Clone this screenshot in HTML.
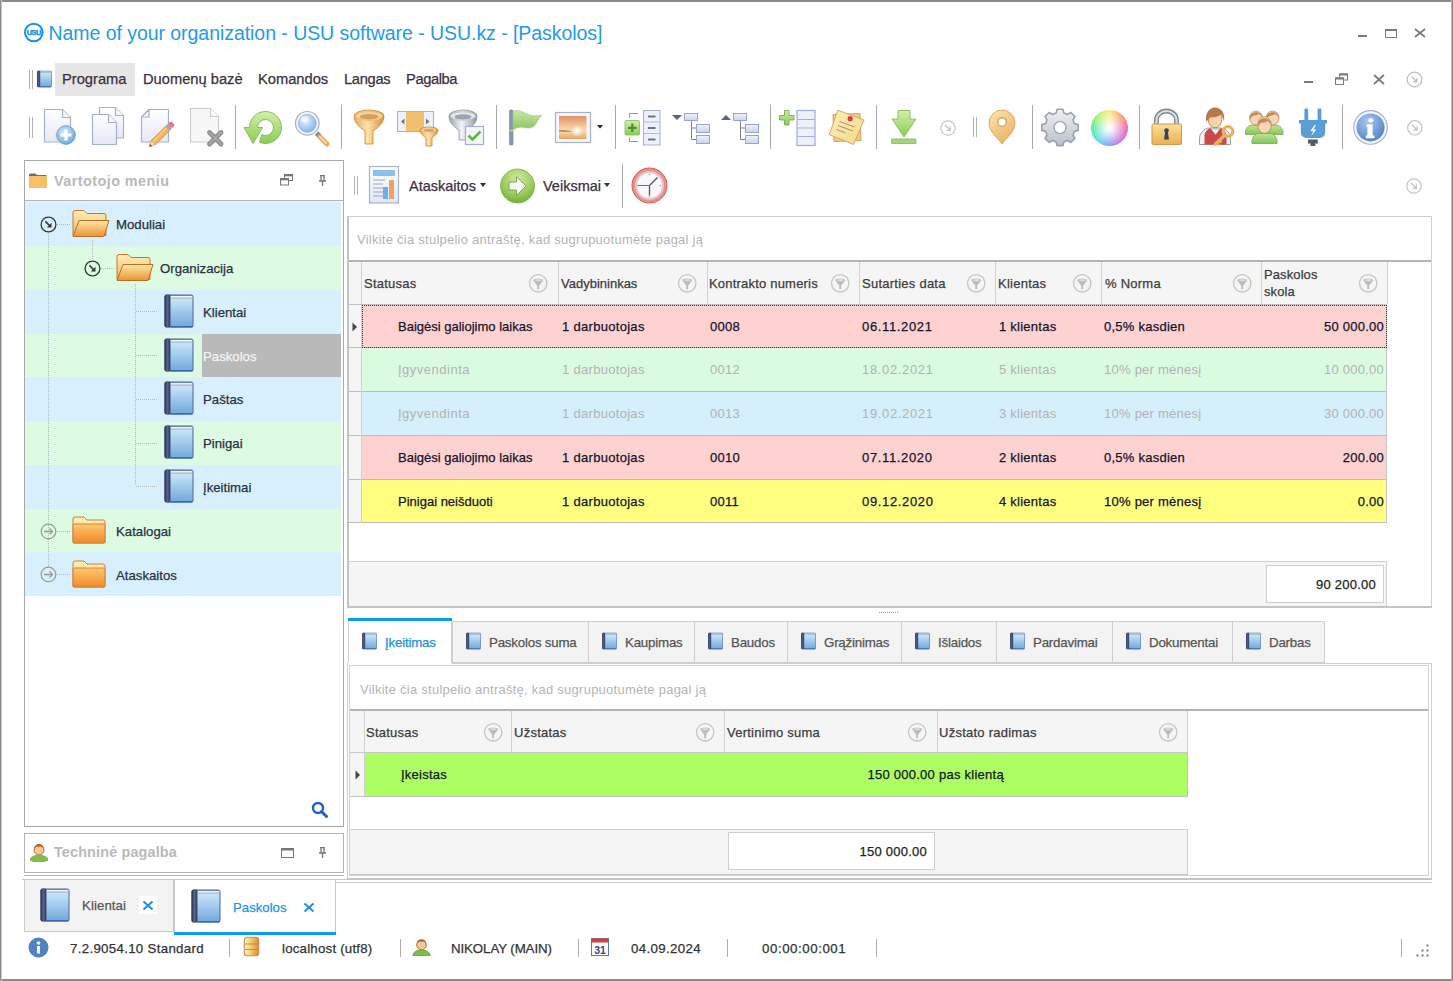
<!DOCTYPE html>
<html><head><meta charset="utf-8">
<style>
*{box-sizing:border-box;margin:0;padding:0}
html,body{width:1453px;height:981px;overflow:hidden;background:#fff;font-family:"Liberation Sans",sans-serif;color:#222}
.a{position:absolute}
.t{position:absolute;white-space:pre;line-height:1;-webkit-text-stroke:0.25px currentColor}
.g{font-size:13px;letter-spacing:0.25px;color:#1b1b2b}
.gl{color:#b4b4b4}
.h{font-size:13px;letter-spacing:0.25px;color:#3a3a3a}
.sep{position:absolute;width:1px;background:#a9a9a9}
.fil{position:absolute;width:19px;height:19px}
</style></head><body>
<svg width="0" height="0" style="position:absolute">
<defs>
<linearGradient id="bookg" x1="0" y1="0" x2="0" y2="1"><stop offset="0" stop-color="#c8e6f8"/><stop offset="1" stop-color="#74aade"/></linearGradient>
<linearGradient id="spineg" x1="0" y1="0" x2="1" y2="0"><stop offset="0" stop-color="#26304e"/><stop offset="0.5" stop-color="#56648a"/><stop offset="1" stop-color="#2a3456"/></linearGradient>
<symbol id="book" viewBox="0 0 30 34"><rect x="0.5" y="0.5" width="29" height="33" rx="2.5" fill="#4a6698"/><rect x="0.5" y="0.5" width="6" height="33" rx="2" fill="url(#spineg)"/><rect x="6.5" y="4.5" width="22" height="27.5" fill="url(#bookg)"/><rect x="6.5" y="1.8" width="22" height="2" fill="#f6f2f2"/><rect x="6.5" y="3.8" width="22" height="1.2" fill="#a8c8e0"/><rect x="6.5" y="32" width="22" height="1.5" fill="#3a68b4"/></symbol>
<symbol id="filt" viewBox="0 0 20 20"><circle cx="10.2" cy="10.3" r="8.7" fill="none" stroke="#c6c6c6" stroke-width="1.3"/><path d="M5.2 7.2h10l-4.1 5.6v3.4h-1.8v-3.4z" fill="#bcbcbc"/><ellipse cx="10.2" cy="7.1" rx="5" ry="1.6" fill="#c4c4c4"/><ellipse cx="10.2" cy="7.1" rx="3" ry="0.7" fill="#eeeeee"/></symbol>
<linearGradient id="fold1" x1="0" y1="0" x2="0" y2="1"><stop offset="0" stop-color="#ffe7a4"/><stop offset="1" stop-color="#eb9436"/></linearGradient>
<linearGradient id="fold0" x1="0" y1="0" x2="0" y2="1"><stop offset="0" stop-color="#ffeeb8"/><stop offset="1" stop-color="#f0b660"/></linearGradient>
<linearGradient id="fold2" x1="0" y1="0" x2="0" y2="1"><stop offset="0" stop-color="#ffc870"/><stop offset="1" stop-color="#f08a28"/></linearGradient>
<symbol id="fopen" viewBox="0 0 38 28"><path d="M1 3a2 2 0 0 1 2-2h9l3 3h17a2 2 0 0 1 2 2v20H1z" fill="url(#fold0)" stroke="#c0782e" stroke-width="1"/><path d="M7 11h30l-5 16H1z" fill="url(#fold1)" stroke="#b8702a" stroke-width="1" stroke-linejoin="round"/></symbol>
<symbol id="fclosed" viewBox="0 0 34 28"><path d="M1 3a2 2 0 0 1 2-2h9l3 3h16a2 2 0 0 1 2 2v20a1 1 0 0 1-1 1H2a1 1 0 0 1-1-1z" fill="#ffeab0" stroke="#c8843a" stroke-width="1"/><rect x="1" y="8" width="32" height="19" rx="1" fill="url(#fold2)" stroke="#c8843a" stroke-width="1"/></symbol>
<symbol id="expd" viewBox="0 0 17 17"><circle cx="8.5" cy="8.5" r="7.4" fill="none" stroke="#383838" stroke-width="1.3"/><path d="M5.4 5.4l5.2 5.2" stroke="#383838" stroke-width="1.5"/><path d="M11.5 6.8v4.7H6.8z" fill="#383838"/></symbol>
<symbol id="expr" viewBox="0 0 17 17"><circle cx="8.5" cy="8.5" r="7.3" fill="none" stroke="#9a9a9a" stroke-width="1.2"/><path d="M4 8.5h8.5M9.5 5.5l3 3-3 3" fill="none" stroke="#9a9a9a" stroke-width="1.3"/></symbol>
<symbol id="circ" viewBox="0 0 17 17"><circle cx="8.5" cy="8.5" r="7.3" fill="none" stroke="#bdbdbd" stroke-width="1.2"/><path d="M5.5 5.5l5 5M10.8 7v3.8H7" fill="none" stroke="#bdbdbd" stroke-width="1.3"/></symbol>
</defs>
</svg>

<!-- window border -->
<div class="a" style="left:0;top:0;width:1453px;height:981px;border:1px solid #8a8a8a;border-top:2px solid #8a8a8a;border-bottom:2px solid #8a8a8a"></div>
<div class="a" style="left:1451px;top:0;width:1px;height:981px;background:#b4b4b4"></div><div class="a" style="left:1px;top:0;width:1px;height:981px;background:#c8c8c8"></div>

<!-- TITLE -->
<svg class="a" style="left:22px;top:21px" width="24" height="24" viewBox="0 0 24 24"><circle cx="11.8" cy="11.5" r="8.8" fill="none" stroke="#1a90ec" stroke-width="2"/><text x="11.8" y="14" font-family="Liberation Sans" font-size="7.6" font-weight="bold" fill="#1a90ec" stroke="#1a90ec" stroke-width="0.4" text-anchor="middle" letter-spacing="-0.6">USU</text></svg>
<div class="t" style="left:48.5px;top:24.2px;font-size:19.5px;letter-spacing:-0.05px;color:#259ae8;-webkit-text-stroke:0">Name of your organization - USU software - USU.kz - [Paskolos]</div>
<div class="a" style="left:1358px;top:35px;width:9px;height:2px;background:#7a7a7a"></div>
<div class="a" style="left:1385px;top:29px;width:12px;height:9px;border:1px solid #7a7a7a;border-top:2px solid #7a7a7a"></div>
<svg class="a" style="left:1414px;top:28px" width="12" height="10"><path d="M1 1L11 9M11 1L1 9" stroke="#7a7a7a" stroke-width="1.7"/></svg>

<!-- MENU -->
<div class="a" style="left:29px;top:70px;width:1px;height:19px;background:#b0b0b0"></div>
<div class="a" style="left:32px;top:70px;width:1px;height:19px;background:#b0b0b0"></div>
<svg class="a" style="left:37px;top:70px" width="15" height="18"><use href="#book" width="15" height="18"/></svg>
<div class="a" style="left:55px;top:63px;width:80px;height:33px;background:#e6e6e6"></div>
<div class="t" style="left:62px;top:71.5px;font-size:14.7px;color:#3c3040">Programa</div>
<div class="t" style="left:143px;top:71.5px;font-size:14.7px;color:#3c3040">Duomenų bazė</div>
<div class="t" style="left:258px;top:71.5px;font-size:14.7px;color:#3c3040">Komandos</div>
<div class="t" style="left:344px;top:71.5px;font-size:14.7px;letter-spacing:-0.3px;color:#3c3040">Langas</div>
<div class="t" style="left:406px;top:71.5px;font-size:14.7px;letter-spacing:-0.4px;color:#3c3040">Pagalba</div>
<div class="a" style="left:1304px;top:81px;width:9px;height:2px;background:#7a7a7a"></div>
<svg class="a" style="left:1335px;top:73px" width="14" height="13"><rect x="4.5" y="1" width="8" height="6" fill="#fff" stroke="#7a7a7a" stroke-width="1"/><rect x="4.5" y="0.5" width="8" height="2" fill="#7a7a7a"/><rect x="0.5" y="5" width="8" height="6.5" fill="#fff" stroke="#7a7a7a" stroke-width="1"/><rect x="0.5" y="4.5" width="8" height="2" fill="#7a7a7a"/></svg>
<svg class="a" style="left:1373px;top:74px" width="12" height="11"><path d="M1 1L11 10M11 1L1 10" stroke="#7a7a7a" stroke-width="1.7"/></svg>
<svg class="a" style="left:1406px;top:71px" width="17" height="17"><use href="#circ"/></svg>


<!-- TOOLBAR -->
<svg class="a" style="left:0;top:0" width="1453" height="160" viewBox="0 0 1453 160">
<defs>
<linearGradient id="pg" x1="0" y1="0" x2="0" y2="1"><stop offset="0" stop-color="#ffffff"/><stop offset="1" stop-color="#e4e9f4"/></linearGradient>
<radialGradient id="plusg" cx="0.4" cy="0.35" r="0.7"><stop offset="0" stop-color="#d6ecfb"/><stop offset="1" stop-color="#6aa6da"/></radialGradient>
<linearGradient id="greeng2" x1="0" y1="0" x2="0" y2="1"><stop offset="0" stop-color="#d2eeaa"/><stop offset="1" stop-color="#8ccc52"/></linearGradient>
<linearGradient id="greeng" x1="0" y1="0" x2="0" y2="1"><stop offset="0" stop-color="#c6eaa0"/><stop offset="1" stop-color="#6fbf3a"/></linearGradient>
<radialGradient id="lensg" cx="0.4" cy="0.35" r="0.7"><stop offset="0" stop-color="#e8f2ff"/><stop offset="1" stop-color="#7eb2ea"/></radialGradient>
<linearGradient id="goldg" x1="0" y1="0" x2="1" y2="0"><stop offset="0" stop-color="#e9a95a"/><stop offset="0.45" stop-color="#ffe3a8"/><stop offset="1" stop-color="#d8913e"/></linearGradient>
<linearGradient id="silvg" x1="0" y1="0" x2="1" y2="0"><stop offset="0" stop-color="#9aa3ad"/><stop offset="0.45" stop-color="#f1f4f7"/><stop offset="1" stop-color="#8f99a4"/></linearGradient>
<linearGradient id="sunsetg" x1="0" y1="0" x2="0" y2="1"><stop offset="0" stop-color="#de9266"/><stop offset="0.45" stop-color="#f4c89a"/><stop offset="0.65" stop-color="#f8dcae"/><stop offset="1" stop-color="#e8a462"/></linearGradient>
<linearGradient id="flagg" x1="0" y1="0" x2="0" y2="1"><stop offset="0" stop-color="#c8e8a4"/><stop offset="1" stop-color="#8cc460"/></linearGradient>
<radialGradient id="sung" cx="0.5" cy="0.5" r="0.5"><stop offset="0" stop-color="#ffffff"/><stop offset="1" stop-color="#ffffff" stop-opacity="0"/></radialGradient>
<linearGradient id="boxg" x1="0" y1="0" x2="0" y2="1"><stop offset="0" stop-color="#eef2fa"/><stop offset="1" stop-color="#c9d3ea"/></linearGradient>
<linearGradient id="noteg" x1="0" y1="0" x2="1" y2="1"><stop offset="0" stop-color="#fdf0b8"/><stop offset="1" stop-color="#f4d888"/></linearGradient>
<linearGradient id="pinng" x1="0" y1="0" x2="0.6" y2="1"><stop offset="0" stop-color="#fde6b0"/><stop offset="1" stop-color="#eab46a"/></linearGradient>
<linearGradient id="gearg" x1="0" y1="0" x2="0" y2="1"><stop offset="0" stop-color="#eef0f4"/><stop offset="1" stop-color="#b9bfca"/></linearGradient>
<linearGradient id="lockg" x1="0" y1="0" x2="0" y2="1"><stop offset="0" stop-color="#fbe09a"/><stop offset="1" stop-color="#e8b050"/></linearGradient>
<linearGradient id="shackg" x1="0" y1="0" x2="1" y2="0"><stop offset="0" stop-color="#8c96a0"/><stop offset="0.5" stop-color="#e6eaee"/><stop offset="1" stop-color="#7c8690"/></linearGradient>
<linearGradient id="grpg" x1="0" y1="0" x2="0" y2="1"><stop offset="0" stop-color="#c0e494"/><stop offset="1" stop-color="#86c456"/></linearGradient>
<radialGradient id="infog" cx="0.4" cy="0.3" r="0.75"><stop offset="0" stop-color="#a8c8f0"/><stop offset="1" stop-color="#5080c8"/></radialGradient>
<linearGradient id="plugg" x1="0" y1="0" x2="0" y2="1"><stop offset="0" stop-color="#6cb2e8"/><stop offset="1" stop-color="#3a86c8"/></linearGradient>
<radialGradient id="clockg" cx="0.5" cy="0.5" r="0.5"><stop offset="0.75" stop-color="#f6f8fa"/><stop offset="1" stop-color="#d8dde2"/></radialGradient>
</defs>
<!-- grip -->
<path d="M29.5 117v21M32.5 117v21" stroke="#b3b3b3" stroke-width="1"/>
<!-- separators -->
<g stroke="#a8a8a8" stroke-width="1">
<path d="M235.5 105v44M341.5 105v44M496.5 105v44M615.5 105v44M770.5 105v44M876.5 105v44M1032.5 105v44M1139.5 105v44M1342.5 105v44"/>
</g>
<!-- new doc -->
<path d="M44.5 109.5h18l8 8v24.5h-26z" fill="url(#pg)" stroke="#a7b0d2" stroke-width="1.2"/>
<path d="M62.5 109.5v8h8" fill="#f4f6fb" stroke="#a7b0d2" stroke-width="1.2"/>
<circle cx="66" cy="135" r="9.3" fill="url(#plusg)" stroke="#6f9fd0" stroke-width="1"/>
<path d="M66 129.5v11M60.5 135h11" stroke="#fff" stroke-width="3.2"/>
<!-- copy -->
<path d="M99.5 107.5h16l8 8v22.5h-24z" fill="url(#pg)" stroke="#a7b0d2" stroke-width="1.2"/>
<path d="M115.5 107.5v8h8" fill="#f4f6fb" stroke="#a7b0d2" stroke-width="1.2"/>
<path d="M92.5 114.5h16l8 8v22h-24z" fill="url(#pg)" stroke="#a7b0d2" stroke-width="1.2"/>
<path d="M108.5 114.5v8h8" fill="#f4f6fb" stroke="#a7b0d2" stroke-width="1.2"/>
<!-- edit -->
<path d="M149 109.5h19.5v32.5h-27v-25z" fill="url(#pg)" stroke="#a7b0d2" stroke-width="1.2"/>
<path d="M149 109.5v7.5h-7.5z" fill="#f8f9fc" stroke="#a7b0d2" stroke-width="1.2" stroke-linejoin="round"/>
<g transform="translate(162 134) rotate(-45)">
<rect x="-12" y="-3" width="20" height="6" fill="#f2b850" stroke="#c88a3a" stroke-width="0.7"/>
<path d="M-12 -1h20" stroke="#fcd890" stroke-width="1"/>
<rect x="8" y="-3" width="3" height="6" fill="#98a8c8"/>
<rect x="11" y="-3" width="4.5" height="6" rx="1.5" fill="#e87878"/>
<path d="M-12 -3l-6 3 6 3z" fill="#f8e0b0" stroke="#c88a3a" stroke-width="0.6"/>
<path d="M-15.5 -1.2l-2.5 1.2 2.5 1.2z" fill="#444"/>
</g>
<!-- delete -->
<path d="M190.5 108.5h20l8 8v25.5h-28z" fill="#f7f7f7" stroke="#cccccc" stroke-width="1.2"/>
<path d="M210.5 108.5v8h8" fill="#fbfbfb" stroke="#cccccc" stroke-width="1.2"/>
<path d="M209.5 132.5l11.5 11.5M221 132.5l-11.5 11.5" stroke="#8c8c8c" stroke-width="4.8" stroke-linecap="round"/>
<path d="M209.5 132.5l11.5 11.5M221 132.5l-11.5 11.5" stroke="#a8a8a8" stroke-width="2" stroke-linecap="round"/>
<!-- refresh -->
<path d="M259.51 142.33A16 16 0 1 0 249.50 127.50L244 127.5L253 143.5L262.5 127.5L257.50 127.50A8 8 0 1 1 261.74 134.56z" fill="url(#greeng2)" stroke="#8cbc5c" stroke-width="1"/>
<!-- magnifier -->
<path d="M316.5 133l3 3" stroke="#8090b0" stroke-width="5"/>
<path d="M320 137l7 7" stroke="#e8a860" stroke-width="5" stroke-linecap="round"/>
<path d="M320 137l6 6" stroke="#f8d8a0" stroke-width="2" stroke-linecap="round"/>
<circle cx="307.3" cy="123.3" r="11.8" fill="#f4f6fb" stroke="#a8b0d0" stroke-width="1.2"/>
<circle cx="307.3" cy="123.3" r="9" fill="url(#lensg)" stroke="#8ca4d4" stroke-width="0.6"/>
<ellipse cx="304.5" cy="119.5" rx="4" ry="3" fill="#fff" opacity="0.7"/>
<!-- gold funnel -->
<path d="M354 116a15 6 0 0 1 30 0c0 8-8 13-11 15v13h-8v-13c-3-2-11-7-11-15z" fill="url(#goldg)" stroke="#c8862e" stroke-width="0.8"/>
<ellipse cx="369" cy="116" rx="13.5" ry="4.5" fill="#f6d49a" stroke="#e8b870" stroke-width="0.8"/><ellipse cx="369" cy="116.8" rx="9.5" ry="2.8" fill="#d8a060"/>
<!-- column filter -->
<rect x="397.5" y="111.5" width="36" height="20" fill="#eef1fa" stroke="#a7b0d2" stroke-width="1"/>
<rect x="406" y="112" width="18" height="19" fill="#f0c070"/>
<path d="M401 121.5l3.5-3v6zM429.5 121.5l-3.5-3v6z" fill="#6c7890"/>
<path d="M420 130a9 3 0 0 1 18 0c0 4-4 6-6 8v8h-6v-8c-2-2-6-4-6-8z" fill="url(#goldg)" stroke="#c8862e" stroke-width="0.8"/>
<ellipse cx="429" cy="130" rx="7.5" ry="2.2" fill="#f2cc90"/><ellipse cx="429" cy="130.4" rx="5" ry="1.3" fill="#d8a060"/>
<!-- gray funnel check -->
<path d="M449 116a14 6 0 0 1 28 0c0 8-7 12-10 14v10h-8v-10c-3-2-10-6-10-14z" fill="url(#silvg)" stroke="#8a949e" stroke-width="0.8"/>
<ellipse cx="463" cy="116" rx="12.5" ry="4.2" fill="#e4e8ec" stroke="#b8c0c8" stroke-width="0.8"/><ellipse cx="463" cy="116.8" rx="8.5" ry="2.6" fill="#9aa4ae"/>
<rect x="465.5" y="126.5" width="18" height="18" fill="#f4f6fb" stroke="#a7b0d2" stroke-width="1.2"/>
<path d="M468.5 135.5l4 4 8-8" fill="none" stroke="#5cb83a" stroke-width="2.6"/>
<!-- flag -->
<rect x="509.5" y="110" width="3.5" height="35" rx="1" fill="#8894b4" stroke="#7080a0" stroke-width="0.6"/>
<rect x="509.5" y="129.5" width="3.5" height="2" fill="#b0d890"/>
<path d="M513 111c5-1.5 9 0.5 13 2.5 5 2.5 10 3 16 1.5-2 3-4.5 5-5.5 8-1.5 3.5-5 5.5-9.5 5-4-.5-8-2.5-14 2z" fill="url(#flagg)" stroke="#a8cc88" stroke-width="0.7"/>
<!-- image -->
<rect x="555.5" y="112.5" width="35" height="30" fill="#f6f8fc" stroke="#a7b0d2" stroke-width="1.2"/>
<rect x="559" y="116" width="27.5" height="23" fill="url(#sunsetg)"/>
<path d="M559 130c6 0 10 0.5 14 1.5-5 .5-9 .5-14 0z" fill="#8a6a50" opacity="0.7"/>
<circle cx="577" cy="131" r="6" fill="url(#sung)"/>
<path d="M597 125h6l-3 3.5z" fill="#222"/>
<!-- add group -->
<path d="M638 113.5h-8.5v4M638 141.5h-8.5v-4" fill="none" stroke="#8a94aa" stroke-width="1"/>
<rect x="625" y="120.5" width="14.5" height="14.5" rx="1" fill="url(#greeng2)" stroke="#88b860" stroke-width="0.8"/>
<path d="M632.3 123.5v8.5M628 127.8h8.5" stroke="#4e8a36" stroke-width="2.2"/>
<rect x="643.5" y="110.5" width="16.5" height="34.5" fill="#eef1fa" stroke="#a7b0d2" stroke-width="1"/>
<path d="M643.5 122h16.5M643.5 133.5h16.5" stroke="#b4bcd8" stroke-width="1"/>
<path d="M648 116.5h7.5M648 128h7.5M648 139.5h7.5" stroke="#6c7488" stroke-width="1.8"/>
<!-- tree expand -->
<path d="M672 115h10l-5 5z" fill="#5a6478"/>
<path d="M691.5 120v19.5h5M691.5 128h5" fill="none" stroke="#7a8296" stroke-width="1"/>
<rect x="684.5" y="113.5" width="13" height="7" fill="url(#boxg)" stroke="#99a4c8" stroke-width="1"/>
<rect x="696.5" y="124.5" width="13" height="8" fill="url(#boxg)" stroke="#99a4c8" stroke-width="1"/>
<rect x="696.5" y="135.5" width="13" height="8" fill="url(#boxg)" stroke="#99a4c8" stroke-width="1"/>
<!-- tree collapse -->
<path d="M721 120h10l-5-5z" fill="#5a6478"/>
<path d="M740.5 120v19.5h5M740.5 128h5" fill="none" stroke="#7a8296" stroke-width="1"/>
<rect x="733.5" y="113.5" width="13" height="7" fill="url(#boxg)" stroke="#99a4c8" stroke-width="1"/>
<rect x="745.5" y="124.5" width="13" height="8" fill="url(#boxg)" stroke="#99a4c8" stroke-width="1"/>
<rect x="745.5" y="135.5" width="13" height="8" fill="url(#boxg)" stroke="#99a4c8" stroke-width="1"/>
<!-- plus list -->
<path d="M784.5 110.5h4.5v5h5v4.5h-5v5h-4.5v-5h-5v-4.5h5z" fill="url(#greeng2)" stroke="#78a850" stroke-width="0.9"/>
<rect x="797" y="110.5" width="18" height="35" fill="#eef1fa" stroke="#a2aad8" stroke-width="1.2"/>
<path d="M797 119.5h18M797 128h18M797 136.5h18" stroke="#a8b0d8" stroke-width="1"/>
<!-- notes -->
<path d="M833 114.5l27-1 1 27-27 1z" fill="#f0cc84" stroke="#d49a50" stroke-width="0.9"/>
<path d="M837.8 110.2L864 120 853.5 144.5 829.3 134.7z" fill="url(#noteg)" stroke="#d4a058" stroke-width="0.9"/>
<path d="M839.5 121.5l15 5.5M838 125.5l15 5.5M836.5 129.5l9 3.3" stroke="#9a8a6a" stroke-width="0.9"/>
<circle cx="850.2" cy="118.7" r="2.6" fill="#d83c40"/>
<!-- download -->
<path d="M898 110.5h12v8.5h6l-12 18-12-18h6z" fill="url(#greeng2)" stroke="#88b860" stroke-width="0.9"/>
<rect x="891.5" y="139" width="24.5" height="4.5" rx="0.5" fill="#a8d478" stroke="#88b860" stroke-width="0.8"/>
<!-- small circle -->
<g transform="translate(940,120)"><circle cx="8" cy="8" r="7.2" fill="none" stroke="#c4c4c4" stroke-width="1.2"/><path d="M5 5l5 5M10.3 6.5v3.8H6.5" fill="none" stroke="#c4c4c4" stroke-width="1.3"/></g>
<path d="M973.5 117v20M976.5 117v20" stroke="#b3b3b3" stroke-width="1"/>
<!-- map pin -->
<path d="M1002 110a13 13 0 0 1 13 13c0 9-9 15-13 21-4-6-13-12-13-21a13 13 0 0 1 13-13z" fill="url(#pinng)" stroke="#d49a48" stroke-width="0.8"/>
<circle cx="1002" cy="122" r="4.2" fill="#fff" stroke="#d8a868" stroke-width="1.4"/>
<!-- gear -->
<path d="M1057.11 109.23L1062.89 109.23L1063.88 113.01L1067.50 114.51L1070.87 112.53L1074.97 116.63L1072.99 120.00L1074.49 123.62L1078.27 124.61L1078.27 130.39L1074.49 131.38L1072.99 135.00L1074.97 138.37L1070.87 142.47L1067.50 140.49L1063.88 141.99L1062.89 145.77L1057.11 145.77L1056.12 141.99L1052.50 140.49L1049.13 142.47L1045.03 138.37L1047.01 135.00L1045.51 131.38L1041.73 130.39L1041.73 124.61L1045.51 123.62L1047.01 120.00L1045.03 116.63L1049.13 112.53L1052.50 114.51L1056.12 113.01z" fill="url(#gearg)" stroke="#9aa2b0" stroke-width="1.6" stroke-linejoin="round"/>
<circle cx="1060" cy="127.5" r="6" fill="#fff" stroke="#9aa2b0" stroke-width="1.2"/>
<!-- lock -->
<path d="M1156.5 124v-4a10 9 0 0 1 20 0v4" fill="none" stroke="#7c8894" stroke-width="4.8"/>
<path d="M1156.5 124v-4a10 9 0 0 1 20 0v4" fill="none" stroke="#d8dde2" stroke-width="2"/>
<rect x="1152" y="124" width="29.5" height="20.5" rx="1.5" fill="url(#lockg)" stroke="#d0964a" stroke-width="1"/>
<circle cx="1166.5" cy="130.5" r="2.3" fill="#3a4656"/>
<path d="M1165.3 131h2.4l1.3 8.5h-5z" fill="#3a4656"/>
<!-- user key -->
<path d="M1199.5 144.5v-6c0-5.5 4.5-10 10-10.5h11c5.5.5 10 5 10 10.5v6z" fill="#f2f2f2" stroke="#909090" stroke-width="0.9"/>
<path d="M1204.5 144.5v-10c1-3.5 3.5-5.5 6-6.5l5 6.5 5-6.5c2.5 1 5 3 6 6.5v10z" fill="#c84a4a"/>
<path d="M1210.5 128l5 6.5 5-6.5-5 2z" fill="#fff" stroke="#a0a0a0" stroke-width="0.6"/>
<ellipse cx="1215" cy="119.5" rx="6.8" ry="8.3" fill="#f5d2a8" stroke="#b07a50" stroke-width="0.8"/>
<path d="M1206.5 122c-2-8 2.5-14.5 8.5-14.5s10.5 5.5 9 14c-.8-3.5-1.8-5.5-3.3-7-2 2-5.5 3-10 2.8-1.5 1-2.8 2.5-4.2 4.7z" fill="#b8764a"/>
<circle cx="1228" cy="131.5" r="4.8" fill="none" stroke="#e8b060" stroke-width="3.2"/>
<path d="M1225 135l-9.5 9" stroke="#e8b060" stroke-width="3.6" stroke-linecap="round"/>
<path d="M1219.5 140.5l2.2 2.2M1217 143l2 2" stroke="#e8b060" stroke-width="2"/>
<!-- group -->
<path d="M1245.5 134.5v-2.5c0-4 3-7.0 7-7.0h6.0c4 0 7 4.5 7 7.0v2.5z" fill="url(#grpg)" stroke="#78a850" stroke-width="0.8"/>
<ellipse cx="1256" cy="118" rx="6.5" ry="7" fill="#f8d6b4" stroke="#b8845a" stroke-width="0.7"/>
<path d="M1249.5 119c-0.5-9 14.0 -9 13.0 0c-1-3-2.5-4.5-4-5-1.5 1.5-4.5 2-5.0 1.5-1.5 1-2.5 2-3 3.5z" fill="#c48a5c"/>
<path d="M1263 134.5v-2.5c0-4 3-7.0 7-7.0h6c4 0 7 4.5 7 7.0v2.5z" fill="url(#grpg)" stroke="#78a850" stroke-width="0.8"/>
<ellipse cx="1272.5" cy="118" rx="6.5" ry="7" fill="#f8d6b4" stroke="#b8845a" stroke-width="0.7"/>
<path d="M1266.0 119c-0.5-9 14.0 -9 13.0 0c-1-3-2.5-4.5-4-5-1.5 1.5-4.5 2-5.0 1.5-1.5 1-2.5 2-3 3.5z" fill="#c48a5c"/>
<path d="M1252 143.5v-2.5c0-4 3-7.5 7-7.5h11c4 0 7 5.0 7 7.5v2.5z" fill="url(#grpg)" stroke="#78a850" stroke-width="0.8"/>
<ellipse cx="1264.5" cy="125" rx="6.8" ry="8.4" fill="#f8d6b4" stroke="#b8845a" stroke-width="0.7"/>
<path d="M1257.7 126c-0.5-10.4 14.6 -10.4 13.6 0c-1-3-2.5-4.5-4-5-1.5 1.5-4.5 2-5.6 1.5-1.5 1-2.5 2-3 3.5z" fill="#c48a5c"/>
<!-- plug -->
<rect x="1304.4" y="108.5" width="3.8" height="13" rx="1.2" fill="#5a9fd4"/>
<rect x="1317.6" y="108.5" width="3.8" height="13" rx="1.2" fill="#5a9fd4"/>
<path d="M1299 120h28v3.6h-1.8v8.4c0 3.5-2.5 6-6 6h-12.4c-3.5 0-6-2.5-6-6v-8.4h-1.8z" fill="#5a9fd4"/>
<path d="M1314.5 125l-4 6h2.8l-2.2 5 5.2-6.5h-2.8l2.4-4.5z" fill="#fff"/>
<path d="M1308 139.5h9.8v4h-2.5v2.5h-4.8v-2.5h-2.5z" fill="#505a68"/>
<!-- info -->
<circle cx="1370.5" cy="127.4" r="16.8" fill="#f4f6fc" stroke="#a4aed0" stroke-width="1.1"/>
<circle cx="1370.5" cy="127.4" r="14" fill="url(#infog)"/>
<ellipse cx="1370.8" cy="120.3" rx="2.6" ry="2.2" fill="#fff"/>
<path d="M1367.2 124.2h5.4v11.2h1.8v2.8h-8.6v-2.8h1.6v-8.4h-1.2z" fill="#fff"/>
<!-- small circle right -->
<g transform="translate(1406.8,119.8)"><circle cx="8" cy="8" r="7.2" fill="none" stroke="#c4c4c4" stroke-width="1.2"/><path d="M5 5l5 5M10.3 6.5v3.8H6.5" fill="none" stroke="#c4c4c4" stroke-width="1.3"/></g>
</svg>
<div class="a" style="left:1091px;top:110px;width:37px;height:36px;border-radius:50%;background:conic-gradient(from 0deg,#f8ec80 0deg,#f8a070 45deg,#f06aa8 85deg,#d070e0 130deg,#8aa0f0 185deg,#58dcf0 225deg,#60e890 275deg,#b8f070 320deg,#f8ec80 360deg)"></div>
<div class="a" style="left:1091px;top:110px;width:37px;height:36px;border-radius:50%;background:radial-gradient(circle at 50% 50%,#fff 0,rgba(255,255,255,0.9) 12%,rgba(255,255,255,0) 70%)"></div>



<!-- LEFT PANEL -->
<div class="a" style="left:24px;top:160px;width:320px;height:667px;border:1px solid #a9a9a9;background:#fff"></div>
<div class="a" style="left:25px;top:200px;width:318px;height:1px;background:#b4b4b4"></div>
<svg class="a" style="left:29px;top:173px" width="18" height="15"><path d="M0 2a1.5 1.5 0 0 1 1.5-1.5h5l1.5 1.5h9.5v3H0z" fill="#6d6d6d"/><rect x="0" y="3" width="18" height="12" fill="#f8c066"/></svg>
<div class="t" style="left:54px;top:174.2px;font-size:14.4px;font-weight:bold;color:#b9b9b9;letter-spacing:0.45px;-webkit-text-stroke:0">Vartotojo meniu</div>
<svg class="a" style="left:280px;top:174px" width="13" height="12"><rect x="4.5" y="0.5" width="8" height="6" fill="#fff" stroke="#777" stroke-width="1"/><rect x="4.5" y="0.5" width="8" height="1.8" fill="#777"/><rect x="0.5" y="4.5" width="8" height="6.5" fill="#fff" stroke="#777" stroke-width="1"/><rect x="0.5" y="4.5" width="8" height="1.8" fill="#777"/></svg>
<svg class="a" style="left:318px;top:175px" width="9" height="11"><path d="M2 0.5h5M3 0.5v5.5M6 0.5v5.5M1 6h7M4.5 6v5" stroke="#777" stroke-width="1.3" fill="none"/></svg>


<div class="a" style="left:25px;top:202px;width:316px;height:44px;background:#d8f0fd;"></div>
<div class="a" style="left:25px;top:246px;width:316px;height:44px;background:#ddfae2;"></div>
<div class="a" style="left:25px;top:290px;width:316px;height:44px;background:#d8f0fd;"></div>
<div class="a" style="left:25px;top:334px;width:316px;height:43px;background:#ddfae2;"></div>
<div class="a" style="left:25px;top:377px;width:316px;height:44px;background:#d8f0fd;"></div>
<div class="a" style="left:25px;top:421px;width:316px;height:44px;background:#ddfae2;"></div>
<div class="a" style="left:25px;top:465px;width:316px;height:44px;background:#d8f0fd;"></div>
<div class="a" style="left:25px;top:509px;width:316px;height:43px;background:#ddfae2;"></div>
<div class="a" style="left:25px;top:552px;width:316px;height:44px;background:#d8f0fd;"></div>
<div class="a" style="left:25px;top:201px;width:316px;height:1px;background:#f4f4f4;"></div>
<div class="a" style="left:48px;top:233px;width:1px;height:333px;background:repeating-linear-gradient(180deg,#b8b8b8 0 1px,transparent 1px 2px)"></div>
<div class="a" style="left:57px;top:224px;width:13px;height:1px;background:repeating-linear-gradient(90deg,#b8b8b8 0 1px,transparent 1px 2px)"></div>
<div class="a" style="left:92px;top:240px;width:1px;height:19px;background:repeating-linear-gradient(180deg,#b8b8b8 0 1px,transparent 1px 2px)"></div>
<div class="a" style="left:101px;top:268px;width:13px;height:1px;background:repeating-linear-gradient(90deg,#b8b8b8 0 1px,transparent 1px 2px)"></div>
<div class="a" style="left:135px;top:284px;width:1px;height:202px;background:repeating-linear-gradient(180deg,#b8b8b8 0 1px,transparent 1px 2px)"></div>
<div class="a" style="left:136px;top:311px;width:21px;height:1px;background:repeating-linear-gradient(90deg,#b8b8b8 0 1px,transparent 1px 2px)"></div>
<div class="a" style="left:136px;top:355px;width:21px;height:1px;background:repeating-linear-gradient(90deg,#b8b8b8 0 1px,transparent 1px 2px)"></div>
<div class="a" style="left:136px;top:399px;width:21px;height:1px;background:repeating-linear-gradient(90deg,#b8b8b8 0 1px,transparent 1px 2px)"></div>
<div class="a" style="left:136px;top:443px;width:21px;height:1px;background:repeating-linear-gradient(90deg,#b8b8b8 0 1px,transparent 1px 2px)"></div>
<div class="a" style="left:136px;top:486px;width:21px;height:1px;background:repeating-linear-gradient(90deg,#b8b8b8 0 1px,transparent 1px 2px)"></div>
<div class="a" style="left:57px;top:531px;width:13px;height:1px;background:repeating-linear-gradient(90deg,#b8b8b8 0 1px,transparent 1px 2px)"></div>
<div class="a" style="left:57px;top:574px;width:13px;height:1px;background:repeating-linear-gradient(90deg,#b8b8b8 0 1px,transparent 1px 2px)"></div>
<svg class="a" style="left:40px;top:216px" width="17" height="17"><use href="#expd" width="17" height="17"/></svg>
<svg class="a" style="left:84px;top:260px" width="17" height="17"><use href="#expd" width="17" height="17"/></svg>
<svg class="a" style="left:40px;top:523px" width="17" height="17"><use href="#expr" width="17" height="17"/></svg>
<svg class="a" style="left:40px;top:566px" width="17" height="17"><use href="#expr" width="17" height="17"/></svg>
<svg class="a" style="left:72px;top:209px" width="38" height="29"><use href="#fopen" width="38" height="29"/></svg>
<svg class="a" style="left:116px;top:253px" width="38" height="29"><use href="#fopen" width="38" height="29"/></svg>
<svg class="a" style="left:72px;top:516px" width="34" height="28"><use href="#fclosed" width="34" height="28"/></svg>
<svg class="a" style="left:72px;top:560px" width="34" height="28"><use href="#fclosed" width="34" height="28"/></svg>
<div class="t" style="left:116px;top:218.33px;font-size:13.2px;letter-spacing:0px;color:#2a3040;font-weight:normal;">Moduliai</div>
<div class="t" style="left:160px;top:262.33px;font-size:13.2px;letter-spacing:0px;color:#2a3040;font-weight:normal;">Organizacija</div>
<div class="a" style="left:202px;top:334px;width:139px;height:43px;background:#b9b9b9;"></div>
<svg class="a" style="left:164px;top:294px" width="30" height="34"><use href="#book" width="30" height="34"/></svg>
<div class="t" style="left:203px;top:305.83px;font-size:13.2px;letter-spacing:0px;color:#2a3040;font-weight:normal;">Klientai</div>
<svg class="a" style="left:164px;top:338px" width="30" height="34"><use href="#book" width="30" height="34"/></svg>
<div class="t" style="left:203px;top:349.83px;font-size:13.2px;letter-spacing:0px;color:#f4f4f4;font-weight:normal;">Paskolos</div>
<svg class="a" style="left:164px;top:381px" width="30" height="34"><use href="#book" width="30" height="34"/></svg>
<div class="t" style="left:203px;top:392.83px;font-size:13.2px;letter-spacing:0px;color:#2a3040;font-weight:normal;">Paštas</div>
<svg class="a" style="left:164px;top:425px" width="30" height="34"><use href="#book" width="30" height="34"/></svg>
<div class="t" style="left:203px;top:436.83px;font-size:13.2px;letter-spacing:0px;color:#2a3040;font-weight:normal;">Pinigai</div>
<svg class="a" style="left:164px;top:469px" width="30" height="34"><use href="#book" width="30" height="34"/></svg>
<div class="t" style="left:203px;top:480.83px;font-size:13.2px;letter-spacing:0px;color:#2a3040;font-weight:normal;">Įkeitimai</div>
<div class="t" style="left:116px;top:524.53px;font-size:13.2px;letter-spacing:0px;color:#2a3040;font-weight:normal;">Katalogai</div>
<div class="t" style="left:116px;top:568.63px;font-size:13.2px;letter-spacing:0px;color:#2a3040;font-weight:normal;">Ataskaitos</div>
<svg class="a" style="left:311px;top:801px" width="18" height="18"><circle cx="7" cy="7" r="5" fill="none" stroke="#1f5fc4" stroke-width="2.4"/><path d="M10.5 10.5l5 5" stroke="#1f5fc4" stroke-width="3" stroke-linecap="round"/></svg>
<div class="a" style="left:24px;top:833px;width:320px;height:40px;background:#fff;border:1px solid #b4b4b4"></div>
<div class="a" style="left:24px;top:874px;width:320px;height:2px;background:#fff;border-bottom:1px solid #b4b4b4"></div>
<svg class="a" style="left:29px;top:843px" width="20" height="19"><ellipse cx="10" cy="16" rx="9" ry="4" fill="#7cbf4a"/><path d="M1 17a9 5 0 0 1 18 0v1H1z" fill="#7cbf4a"/><circle cx="10" cy="7" r="5" fill="#f2c89a" stroke="#c07030" stroke-width="1"/><path d="M5 6a5 5 0 0 1 10 0c-1-2-3-3-5-2-2-1-4 0-5 2z" fill="#b4602a"/></svg>
<div class="t" style="left:54px;top:845.21px;font-size:14.4px;letter-spacing:0.15px;color:#b9b9b9;font-weight:bold;-webkit-text-stroke:0;">Techninė pagalba</div>
<svg class="a" style="left:281px;top:848px" width="13" height="11"><rect x="0.5" y="0.5" width="12" height="9" fill="none" stroke="#777" stroke-width="1"/><rect x="0.5" y="0.5" width="12" height="2" fill="#777"/></svg>
<svg class="a" style="left:318px;top:847px" width="9" height="11"><path d="M2 0.5h5M3 0.5v5.5M6 0.5v5.5M1 6h7M4.5 6v5" stroke="#777" stroke-width="1.3" fill="none"/></svg>
<div class="a" style="left:22px;top:879px;width:1410px;height:1px;background:#c8c8c8;"></div>
<div class="a" style="left:24px;top:880px;width:150px;height:52px;background:#f3f3f3;border:1px solid #c8c8c8;border-top:none"></div>
<svg class="a" style="left:40px;top:888px" width="30" height="34"><use href="#book" width="30" height="34"/></svg>
<div class="t" style="left:82px;top:898.83px;font-size:13.2px;letter-spacing:0.1px;color:#555;font-weight:normal;">Klientai</div>
<div class="a" style="left:139px;top:896px;width:18px;height:18px;background:#fff;"></div>
<svg class="a" style="left:142px;top:900px" width="12" height="11"><path d="M1.5 1.5l9 8M10.5 1.5l-9 8" stroke="#1e8fe2" stroke-width="2"/></svg>
<div class="a" style="left:174px;top:880px;width:162px;height:52px;background:#fff;border:1px solid #c8c8c8;border-top:none;border-bottom:none"></div>
<div class="a" style="left:174px;top:932px;width:162px;height:3px;background:#0c9cee;"></div>
<svg class="a" style="left:191px;top:889px" width="30" height="34"><use href="#book" width="30" height="34"/></svg>
<div class="t" style="left:233px;top:900.53px;font-size:13.2px;letter-spacing:0px;color:#1a96ea;font-weight:normal;">Paskolos</div>
<svg class="a" style="left:303px;top:902px" width="12" height="11"><path d="M1.5 1.5l9 8M10.5 1.5l-9 8" stroke="#1e8fe2" stroke-width="2"/></svg>
<svg class="a" style="left:28px;top:937px" width="21" height="21"><circle cx="10.5" cy="10.5" r="10" fill="#4d83c4"/><circle cx="10.5" cy="6" r="1.8" fill="#fff"/><rect x="9" y="9" width="3" height="7.5" fill="#fff"/></svg>
<div class="t" style="left:70px;top:942.14px;font-size:13.3px;letter-spacing:0.3px;color:#333;font-weight:normal;">7.2.9054.10 Standard</div>
<div class="a" style="left:229px;top:939px;width:1px;height:18px;background:#b0b0b0;"></div>
<div class="a" style="left:400px;top:939px;width:1px;height:18px;background:#b0b0b0;"></div>
<div class="a" style="left:578px;top:939px;width:1px;height:18px;background:#b0b0b0;"></div>
<div class="a" style="left:727px;top:939px;width:1px;height:18px;background:#b0b0b0;"></div>
<div class="a" style="left:876px;top:939px;width:1px;height:18px;background:#b0b0b0;"></div>
<div class="a" style="left:1401px;top:939px;width:1px;height:18px;background:#b0b0b0;"></div>
<svg class="a" style="left:243px;top:936px" width="17" height="21"><defs><linearGradient id="dbg" x1="0" x2="1"><stop offset="0" stop-color="#fff6d8"/><stop offset="0.45" stop-color="#f4cc6a"/><stop offset="1" stop-color="#dc8a3a"/></linearGradient></defs><rect x="1.3" y="1.3" width="14.4" height="18.4" rx="3" fill="url(#dbg)" stroke="#cf8a48" stroke-width="1.1"/><path d="M2 8h13M2 13.5h13" stroke="#d08440" stroke-width="1"/></svg>
<div class="t" style="left:282px;top:942.14px;font-size:13.3px;letter-spacing:0.2px;color:#333;font-weight:normal;">localhost (utf8)</div>
<svg class="a" style="left:412px;top:938px" width="19" height="18"><path d="M1 17a8.5 5 0 0 1 17 0v1H1z" fill="#7cbf4a" stroke="#5a9a30" stroke-width="0.8"/><circle cx="9.5" cy="7" r="4.8" fill="#f2c89a" stroke="#c07030" stroke-width="1"/><path d="M4.7 6a4.8 4.8 0 0 1 9.6 0c-1-2-3-3-4.8-2-2-1-3.8 0-4.8 2z" fill="#b4602a"/></svg>
<div class="t" style="left:451px;top:942.14px;font-size:13.3px;letter-spacing:-0.1px;color:#333;font-weight:normal;">NIKOLAY (MAIN)</div>
<svg class="a" style="left:591px;top:938px" width="18" height="18"><rect x="0.5" y="0.5" width="17" height="17" fill="#fff" stroke="#5a7ab0" stroke-width="1"/><rect x="0.5" y="0.5" width="17" height="4" fill="#d84040"/><text x="9" y="15.5" font-family="Liberation Sans" font-size="10.5" font-weight="bold" fill="#2a4a8a" text-anchor="middle">31</text></svg>
<div class="t" style="left:631px;top:942.14px;font-size:13.3px;letter-spacing:0.35px;color:#333;font-weight:normal;">04.09.2024</div>
<div class="t" style="left:762px;top:942.14px;font-size:13.3px;letter-spacing:0.55px;color:#333;font-weight:normal;">00:00:00:001</div>
<svg class="a" style="left:1415px;top:943px" width="14" height="14"><g fill="#7a7a7a"><rect x="11.5" y="1.5" width="2" height="2"/><rect x="6.5" y="6.5" width="2" height="2"/><rect x="11.5" y="6.5" width="2" height="2"/><rect x="1.5" y="11.5" width="2" height="2"/><rect x="6.5" y="11.5" width="2" height="2"/><rect x="11.5" y="11.5" width="2" height="2"/></g></svg>

<svg class="a" style="left:340px;top:160px" width="1113" height="55" viewBox="340 160 1113 55">
<defs>
<radialGradient id="garr" cx="0.5" cy="0.3" r="0.75"><stop offset="0" stop-color="#d4eca0"/><stop offset="0.6" stop-color="#9ccc5c"/><stop offset="1" stop-color="#6aa838"/></radialGradient>
<linearGradient id="repg" x1="0" y1="0" x2="0" y2="1"><stop offset="0" stop-color="#ffffff"/><stop offset="1" stop-color="#dfe6f4"/></linearGradient>
</defs>
<path d="M354.5 176v19M357.5 176v19" stroke="#b3b3b3" stroke-width="1"/>
<rect x="369.5" y="166.5" width="29" height="36.5" fill="url(#repg)" stroke="#a7b2d4" stroke-width="1.2"/>
<rect x="373" y="170" width="22" height="6" fill="#8cc0ea"/>
<path d="M373 180h12M373 184h10M373 188h10M373 192h10M373 196h10" stroke="#9aa6c0" stroke-width="1"/>
<rect x="383" y="187" width="5" height="12" fill="#6ab0e8"/>
<rect x="389" y="180" width="5" height="19" fill="#f0a060"/>
<path d="M480 183h6l-3 4z" fill="#333"/>
<circle cx="517.5" cy="186" r="17" fill="url(#garr)" stroke="#7ab050" stroke-width="0.8"/>
<path d="M509 182h7.5v-5.5l9.5 9.5-9.5 9.5v-5.5h-7.5z" fill="#f4f6f0" stroke="#7a9a60" stroke-width="0.9"/>
<path d="M604 183h6l-3 4z" fill="#333"/>
<path d="M622.5 164v44" stroke="#a8a8a8" stroke-width="1"/>
<circle cx="649.5" cy="185.5" r="17.5" fill="#e89090" stroke="#c86060" stroke-width="1"/>
<circle cx="649.5" cy="185.5" r="14.5" fill="#f2c4c4"/>
<circle cx="649.5" cy="185.5" r="13" fill="#f6f8fa" stroke="#d8b0b0" stroke-width="0.6"/>
<g fill="#9aa"><circle cx="649.5" cy="174.5" r="0.8"/><circle cx="649.5" cy="196.5" r="0.8"/><circle cx="638.5" cy="185.5" r="0.8"/><circle cx="660.5" cy="185.5" r="0.8"/></g>
<path d="M649.5 185.5l8-8M649.5 185.5v10" stroke="#555" stroke-width="1.3"/>
<path d="M649.5 185.5h-12" stroke="#e04040" stroke-width="1"/>
<g transform="translate(1406,178)"><circle cx="8" cy="8" r="7.2" fill="none" stroke="#c4c4c4" stroke-width="1.2"/><path d="M5 5l5 5M10.3 6.5v3.8H6.5" fill="none" stroke="#c4c4c4" stroke-width="1.3"/></g>
</svg>
<div class="t" style="left:409px;top:178.73px;font-size:14.5px;letter-spacing:0px;color:#3a3040;font-weight:normal;">Ataskaitos</div>
<div class="t" style="left:543px;top:178.73px;font-size:14.5px;letter-spacing:0px;color:#3a3040;font-weight:normal;">Veiksmai</div>
<div class="a" style="left:347px;top:216px;width:1085px;height:392px;background:#fff;border:1px solid #cfcfcf;border-left:2px solid #c4c4c4;border-bottom:2px solid #c4c4c4"></div>
<div class="t" style="left:357px;top:233.40px;font-size:13px;letter-spacing:0.25px;color:#b4b4b4;font-weight:normal;-webkit-text-stroke:0;">Vilkite čia stulpelio antraštę, kad sugrupuotumėte pagal ją</div>
<div class="a" style="left:349px;top:260px;width:1082px;height:2px;background:#b4b4b4;"></div>
<div class="a" style="left:349px;top:262px;width:1038px;height:42px;background:#f5f5f5;"></div>
<div class="a" style="left:349px;top:304px;width:1038px;height:1px;background:#c0c0c0;"></div>
<div class="a" style="left:361px;top:262px;width:1px;height:42px;background:#d0d0d0;"></div>
<div class="a" style="left:558px;top:262px;width:1px;height:42px;background:#d0d0d0;"></div>
<div class="a" style="left:707px;top:262px;width:1px;height:42px;background:#d0d0d0;"></div>
<div class="a" style="left:859px;top:262px;width:1px;height:42px;background:#d0d0d0;"></div>
<div class="a" style="left:995px;top:262px;width:1px;height:42px;background:#d0d0d0;"></div>
<div class="a" style="left:1101px;top:262px;width:1px;height:42px;background:#d0d0d0;"></div>
<div class="a" style="left:1261px;top:262px;width:1px;height:42px;background:#d0d0d0;"></div>
<div class="a" style="left:1387px;top:262px;width:1px;height:42px;background:#d0d0d0;"></div>
<div class="t" style="left:364px;top:277.00px;font-size:13px;letter-spacing:0.25px;color:#3c3c3c;font-weight:normal;">Statusas</div>
<svg class="a" style="left:528px;top:273px" width="20" height="20"><use href="#filt" width="20" height="20"/></svg>
<div class="t" style="left:561px;top:277.00px;font-size:13px;letter-spacing:0px;color:#3c3c3c;font-weight:normal;">Vadybininkas</div>
<svg class="a" style="left:677px;top:273px" width="20" height="20"><use href="#filt" width="20" height="20"/></svg>
<div class="t" style="left:709px;top:277.00px;font-size:13px;letter-spacing:0.2px;color:#3c3c3c;font-weight:normal;">Kontrakto numeris</div>
<svg class="a" style="left:830px;top:273px" width="20" height="20"><use href="#filt" width="20" height="20"/></svg>
<div class="t" style="left:862px;top:277.00px;font-size:13px;letter-spacing:0.25px;color:#3c3c3c;font-weight:normal;">Sutarties data</div>
<svg class="a" style="left:966px;top:273px" width="20" height="20"><use href="#filt" width="20" height="20"/></svg>
<div class="t" style="left:998px;top:277.00px;font-size:13px;letter-spacing:0.25px;color:#3c3c3c;font-weight:normal;">Klientas</div>
<svg class="a" style="left:1072px;top:273px" width="20" height="20"><use href="#filt" width="20" height="20"/></svg>
<div class="t" style="left:1105px;top:277.00px;font-size:13px;letter-spacing:0.25px;color:#3c3c3c;font-weight:normal;">% Norma</div>
<svg class="a" style="left:1232px;top:273px" width="20" height="20"><use href="#filt" width="20" height="20"/></svg>
<svg class="a" style="left:1358px;top:273px" width="20" height="20"><use href="#filt" width="20" height="20"/></svg>
<div class="t" style="left:1264px;top:268.20px;font-size:13px;letter-spacing:0.1px;color:#3c3c3c;font-weight:normal;">Paskolos</div>
<div class="t" style="left:1264px;top:284.80px;font-size:13px;letter-spacing:0.1px;color:#3c3c3c;font-weight:normal;">skola</div>
<div class="a" style="left:349px;top:305px;width:12px;height:43px;background:#f5f5f5;"></div>
<div class="a" style="left:362px;top:305px;width:1025px;height:43px;background:#ffd2d2;"></div>
<div class="a" style="left:349px;top:347px;width:1038px;height:1px;background:#bcbcbc;"></div>
<div class="a" style="left:361px;top:305px;width:1px;height:43px;background:#d0d0d0;"></div>
<div class="a" style="left:1386px;top:305px;width:1px;height:43px;background:#c4c4c4;"></div>
<div class="t" style="left:398px;top:319.50px;font-size:13px;letter-spacing:0px;color:#15152a;font-weight:normal;">Baigėsi galiojimo laikas</div>
<div class="t" style="left:562px;top:319.50px;font-size:13px;letter-spacing:0.3px;color:#15152a;font-weight:normal;">1 darbuotojas</div>
<div class="t" style="left:710px;top:319.50px;font-size:13px;letter-spacing:0.25px;color:#15152a;font-weight:normal;">0008</div>
<div class="t" style="left:862px;top:319.50px;font-size:13px;letter-spacing:0.65px;color:#15152a;font-weight:normal;">06.11.2021</div>
<div class="t" style="left:999px;top:319.50px;font-size:13px;letter-spacing:0.25px;color:#15152a;font-weight:normal;">1 klientas</div>
<div class="t" style="left:1104px;top:319.50px;font-size:13px;letter-spacing:0.25px;color:#15152a;font-weight:normal;">0,5% kasdien</div>
<div class="t" style="right:69px;top:319.50px;font-size:13px;letter-spacing:0.25px;color:#15152a;font-weight:normal;text-align:right;">50 000.00</div>
<div class="a" style="left:349px;top:348px;width:12px;height:44px;background:#f5f5f5;"></div>
<div class="a" style="left:362px;top:348px;width:1025px;height:44px;background:#dbfbe1;"></div>
<div class="a" style="left:349px;top:391px;width:1038px;height:1px;background:#bcbcbc;"></div>
<div class="a" style="left:361px;top:348px;width:1px;height:44px;background:#d0d0d0;"></div>
<div class="a" style="left:1386px;top:348px;width:1px;height:44px;background:#c4c4c4;"></div>
<div class="t" style="left:398px;top:362.50px;font-size:13px;letter-spacing:0.5px;color:#b2b2b2;font-weight:normal;-webkit-text-stroke:0;">Įgyvendinta</div>
<div class="t" style="left:562px;top:362.50px;font-size:13px;letter-spacing:0.3px;color:#b2b2b2;font-weight:normal;-webkit-text-stroke:0;">1 darbuotojas</div>
<div class="t" style="left:710px;top:362.50px;font-size:13px;letter-spacing:0.25px;color:#b2b2b2;font-weight:normal;-webkit-text-stroke:0;">0012</div>
<div class="t" style="left:862px;top:362.50px;font-size:13px;letter-spacing:0.65px;color:#b2b2b2;font-weight:normal;-webkit-text-stroke:0;">18.02.2021</div>
<div class="t" style="left:999px;top:362.50px;font-size:13px;letter-spacing:0.25px;color:#b2b2b2;font-weight:normal;-webkit-text-stroke:0;">5 klientas</div>
<div class="t" style="left:1104px;top:362.50px;font-size:13px;letter-spacing:0.25px;color:#b2b2b2;font-weight:normal;-webkit-text-stroke:0;">10% per mėnesį</div>
<div class="t" style="right:69px;top:362.50px;font-size:13px;letter-spacing:0.25px;color:#b2b2b2;font-weight:normal;text-align:right;-webkit-text-stroke:0;">10 000.00</div>
<div class="a" style="left:349px;top:392px;width:12px;height:44px;background:#f5f5f5;"></div>
<div class="a" style="left:362px;top:392px;width:1025px;height:44px;background:#d6effc;"></div>
<div class="a" style="left:349px;top:435px;width:1038px;height:1px;background:#bcbcbc;"></div>
<div class="a" style="left:361px;top:392px;width:1px;height:44px;background:#d0d0d0;"></div>
<div class="a" style="left:1386px;top:392px;width:1px;height:44px;background:#c4c4c4;"></div>
<div class="t" style="left:398px;top:406.50px;font-size:13px;letter-spacing:0.5px;color:#b2b2b2;font-weight:normal;-webkit-text-stroke:0;">Įgyvendinta</div>
<div class="t" style="left:562px;top:406.50px;font-size:13px;letter-spacing:0.3px;color:#b2b2b2;font-weight:normal;-webkit-text-stroke:0;">1 darbuotojas</div>
<div class="t" style="left:710px;top:406.50px;font-size:13px;letter-spacing:0.25px;color:#b2b2b2;font-weight:normal;-webkit-text-stroke:0;">0013</div>
<div class="t" style="left:862px;top:406.50px;font-size:13px;letter-spacing:0.65px;color:#b2b2b2;font-weight:normal;-webkit-text-stroke:0;">19.02.2021</div>
<div class="t" style="left:999px;top:406.50px;font-size:13px;letter-spacing:0.25px;color:#b2b2b2;font-weight:normal;-webkit-text-stroke:0;">3 klientas</div>
<div class="t" style="left:1104px;top:406.50px;font-size:13px;letter-spacing:0.25px;color:#b2b2b2;font-weight:normal;-webkit-text-stroke:0;">10% per mėnesį</div>
<div class="t" style="right:69px;top:406.50px;font-size:13px;letter-spacing:0.25px;color:#b2b2b2;font-weight:normal;text-align:right;-webkit-text-stroke:0;">30 000.00</div>
<div class="a" style="left:349px;top:436px;width:12px;height:44px;background:#f5f5f5;"></div>
<div class="a" style="left:362px;top:436px;width:1025px;height:44px;background:#ffd2d2;"></div>
<div class="a" style="left:349px;top:479px;width:1038px;height:1px;background:#bcbcbc;"></div>
<div class="a" style="left:361px;top:436px;width:1px;height:44px;background:#d0d0d0;"></div>
<div class="a" style="left:1386px;top:436px;width:1px;height:44px;background:#c4c4c4;"></div>
<div class="t" style="left:398px;top:450.50px;font-size:13px;letter-spacing:0px;color:#15152a;font-weight:normal;">Baigėsi galiojimo laikas</div>
<div class="t" style="left:562px;top:450.50px;font-size:13px;letter-spacing:0.3px;color:#15152a;font-weight:normal;">1 darbuotojas</div>
<div class="t" style="left:710px;top:450.50px;font-size:13px;letter-spacing:0.25px;color:#15152a;font-weight:normal;">0010</div>
<div class="t" style="left:862px;top:450.50px;font-size:13px;letter-spacing:0.65px;color:#15152a;font-weight:normal;">07.11.2020</div>
<div class="t" style="left:999px;top:450.50px;font-size:13px;letter-spacing:0.25px;color:#15152a;font-weight:normal;">2 klientas</div>
<div class="t" style="left:1104px;top:450.50px;font-size:13px;letter-spacing:0.25px;color:#15152a;font-weight:normal;">0,5% kasdien</div>
<div class="t" style="right:69px;top:450.50px;font-size:13px;letter-spacing:0.25px;color:#15152a;font-weight:normal;text-align:right;">200.00</div>
<div class="a" style="left:349px;top:480px;width:12px;height:43px;background:#f5f5f5;"></div>
<div class="a" style="left:362px;top:480px;width:1025px;height:43px;background:#ffff80;"></div>
<div class="a" style="left:349px;top:522px;width:1038px;height:1px;background:#bcbcbc;"></div>
<div class="a" style="left:361px;top:480px;width:1px;height:43px;background:#d0d0d0;"></div>
<div class="a" style="left:1386px;top:480px;width:1px;height:43px;background:#c4c4c4;"></div>
<div class="t" style="left:398px;top:494.50px;font-size:13px;letter-spacing:0px;color:#15152a;font-weight:normal;">Pinigai neišduoti</div>
<div class="t" style="left:562px;top:494.50px;font-size:13px;letter-spacing:0.3px;color:#15152a;font-weight:normal;">1 darbuotojas</div>
<div class="t" style="left:710px;top:494.50px;font-size:13px;letter-spacing:0.25px;color:#15152a;font-weight:normal;">0011</div>
<div class="t" style="left:862px;top:494.50px;font-size:13px;letter-spacing:0.65px;color:#15152a;font-weight:normal;">09.12.2020</div>
<div class="t" style="left:999px;top:494.50px;font-size:13px;letter-spacing:0.25px;color:#15152a;font-weight:normal;">4 klientas</div>
<div class="t" style="left:1104px;top:494.50px;font-size:13px;letter-spacing:0.25px;color:#15152a;font-weight:normal;">10% per mėnesį</div>
<div class="t" style="right:69px;top:494.50px;font-size:13px;letter-spacing:0.25px;color:#15152a;font-weight:normal;text-align:right;">0.00</div>
<div class="a" style="left:362px;top:305px;width:1025px;height:43px;border:1px dotted #333"></div>
<svg class="a" style="left:352px;top:322px" width="6" height="10"><path d="M0.5 0.5l4.5 4.5-4.5 4.5z" fill="#444"/></svg>
<div class="a" style="left:349px;top:561px;width:1038px;height:45px;background:#f5f5f5;border-top:1px solid #cfcfcf;border-right:1px solid #cfcfcf"></div>
<div class="a" style="left:1266px;top:565px;width:118px;height:38px;background:#fff;border:1px solid #cfcfcf"></div>
<div class="t" style="right:77px;top:578.00px;font-size:13px;letter-spacing:0.25px;color:#222;font-weight:normal;text-align:right;">90 200.00</div>
<div class="a" style="left:879px;top:612px;width:19px;height:1px;background:repeating-linear-gradient(90deg,#999 0 1px,transparent 1px 2px)"></div>
<div class="a" style="left:348px;top:618px;width:104px;height:48px;background:#fff;border-left:1px solid #cfcfcf;border-right:1px solid #cfcfcf"></div>
<div class="a" style="left:348px;top:618px;width:104px;height:3px;background:#0c9aee;"></div>
<svg class="a" style="left:362px;top:632px" width="15" height="18"><use href="#book" width="15" height="18"/></svg>
<div class="t" style="left:385px;top:636.04px;font-size:13.3px;letter-spacing:-0.2px;color:#1e8fe2;font-weight:normal;">Įkeitimas</div>
<div class="a" style="left:452px;top:621px;width:137px;height:42px;background:#f3f3f3;border:1px solid #cfcfcf"></div>
<svg class="a" style="left:466px;top:632px" width="15" height="18"><use href="#book" width="15" height="18"/></svg>
<div class="t" style="left:489px;top:636.04px;font-size:13.3px;letter-spacing:-0.2px;color:#555;font-weight:normal;">Paskolos suma</div>
<div class="a" style="left:588px;top:621px;width:107px;height:42px;background:#f3f3f3;border:1px solid #cfcfcf"></div>
<svg class="a" style="left:602px;top:632px" width="15" height="18"><use href="#book" width="15" height="18"/></svg>
<div class="t" style="left:625px;top:636.04px;font-size:13.3px;letter-spacing:-0.2px;color:#555;font-weight:normal;">Kaupimas</div>
<div class="a" style="left:694px;top:621px;width:94px;height:42px;background:#f3f3f3;border:1px solid #cfcfcf"></div>
<svg class="a" style="left:708px;top:632px" width="15" height="18"><use href="#book" width="15" height="18"/></svg>
<div class="t" style="left:731px;top:636.04px;font-size:13.3px;letter-spacing:-0.2px;color:#555;font-weight:normal;">Baudos</div>
<div class="a" style="left:787px;top:621px;width:115px;height:42px;background:#f3f3f3;border:1px solid #cfcfcf"></div>
<svg class="a" style="left:801px;top:632px" width="15" height="18"><use href="#book" width="15" height="18"/></svg>
<div class="t" style="left:824px;top:636.04px;font-size:13.3px;letter-spacing:-0.2px;color:#555;font-weight:normal;">Grąžinimas</div>
<div class="a" style="left:901px;top:621px;width:96px;height:42px;background:#f3f3f3;border:1px solid #cfcfcf"></div>
<svg class="a" style="left:915px;top:632px" width="15" height="18"><use href="#book" width="15" height="18"/></svg>
<div class="t" style="left:938px;top:636.04px;font-size:13.3px;letter-spacing:-0.2px;color:#555;font-weight:normal;">Išlaidos</div>
<div class="a" style="left:996px;top:621px;width:117px;height:42px;background:#f3f3f3;border:1px solid #cfcfcf"></div>
<svg class="a" style="left:1010px;top:632px" width="15" height="18"><use href="#book" width="15" height="18"/></svg>
<div class="t" style="left:1033px;top:636.04px;font-size:13.3px;letter-spacing:-0.2px;color:#555;font-weight:normal;">Pardavimai</div>
<div class="a" style="left:1112px;top:621px;width:121px;height:42px;background:#f3f3f3;border:1px solid #cfcfcf"></div>
<svg class="a" style="left:1126px;top:632px" width="15" height="18"><use href="#book" width="15" height="18"/></svg>
<div class="t" style="left:1149px;top:636.04px;font-size:13.3px;letter-spacing:-0.2px;color:#555;font-weight:normal;">Dokumentai</div>
<div class="a" style="left:1232px;top:621px;width:93px;height:42px;background:#f3f3f3;border:1px solid #cfcfcf"></div>
<svg class="a" style="left:1246px;top:632px" width="15" height="18"><use href="#book" width="15" height="18"/></svg>
<div class="t" style="left:1269px;top:636.04px;font-size:13.3px;letter-spacing:-0.2px;color:#555;font-weight:normal;">Darbas</div>
<div class="a" style="left:347px;top:663px;width:1085px;height:217px;background:#fff;border:1px solid #cfcfcf;border-bottom:2px solid #c4c4c4"></div>
<div class="a" style="left:349px;top:665px;width:1080px;height:211px;background:#fff;border:1px solid #d4d4d4"></div>
<div class="a" style="left:348px;top:663px;width:104px;height:2px;background:#fff;"></div>
<div class="a" style="left:335px;top:882px;width:1097px;height:1px;background:#d0d0d0;"></div>
<div class="t" style="left:360px;top:683.40px;font-size:13px;letter-spacing:0.25px;color:#b4b4b4;font-weight:normal;-webkit-text-stroke:0;">Vilkite čia stulpelio antraštę, kad sugrupuotumėte pagal ją</div>
<div class="a" style="left:350px;top:709px;width:1078px;height:2px;background:#b4b4b4;"></div>
<div class="a" style="left:350px;top:711px;width:838px;height:41px;background:#f5f5f5;"></div>
<div class="a" style="left:350px;top:752px;width:838px;height:1px;background:#c8c8c8;"></div>
<div class="a" style="left:364px;top:711px;width:1px;height:41px;background:#d0d0d0;"></div>
<div class="a" style="left:511px;top:711px;width:1px;height:41px;background:#d0d0d0;"></div>
<div class="a" style="left:724px;top:711px;width:1px;height:41px;background:#d0d0d0;"></div>
<div class="a" style="left:937px;top:711px;width:1px;height:41px;background:#d0d0d0;"></div>
<div class="a" style="left:1187px;top:711px;width:1px;height:41px;background:#d0d0d0;"></div>
<div class="t" style="left:366px;top:725.80px;font-size:13px;letter-spacing:0.25px;color:#3c3c3c;font-weight:normal;">Statusas</div>
<svg class="a" style="left:483px;top:722px" width="20" height="20"><use href="#filt" width="20" height="20"/></svg>
<div class="t" style="left:514px;top:725.80px;font-size:13px;letter-spacing:0.25px;color:#3c3c3c;font-weight:normal;">Užstatas</div>
<svg class="a" style="left:695px;top:722px" width="20" height="20"><use href="#filt" width="20" height="20"/></svg>
<div class="t" style="left:727px;top:725.80px;font-size:13px;letter-spacing:0.25px;color:#3c3c3c;font-weight:normal;">Vertinimo suma</div>
<svg class="a" style="left:907px;top:722px" width="20" height="20"><use href="#filt" width="20" height="20"/></svg>
<div class="t" style="left:939px;top:725.80px;font-size:13px;letter-spacing:0.25px;color:#3c3c3c;font-weight:normal;">Užstato radimas</div>
<svg class="a" style="left:1158px;top:722px" width="20" height="20"><use href="#filt" width="20" height="20"/></svg>
<div class="a" style="left:350px;top:753px;width:14px;height:43px;background:#f5f5f5;"></div>
<div class="a" style="left:364px;top:753px;width:823px;height:43px;background:#adfe62;"></div>
<div class="a" style="left:350px;top:796px;width:838px;height:1px;background:#c4c4c4;"></div>
<div class="a" style="left:364px;top:753px;width:1px;height:43px;background:#d0d0d0;"></div>
<div class="a" style="left:1187px;top:753px;width:1px;height:43px;background:#c4c4c4;"></div>
<svg class="a" style="left:355px;top:770px" width="6" height="10"><path d="M0.5 0.5l4.5 4.5-4.5 4.5z" fill="#444"/></svg>
<div class="t" style="left:401px;top:768.20px;font-size:13px;letter-spacing:0.25px;color:#15152a;font-weight:normal;">Įkeistas</div>
<div class="t" style="right:518px;top:768.20px;font-size:13px;letter-spacing:0.25px;color:#15152a;font-weight:normal;text-align:right;">150 000.00</div>
<div class="t" style="left:939px;top:768.20px;font-size:13px;letter-spacing:0.25px;color:#15152a;font-weight:normal;">pas klientą</div>
<div class="a" style="left:350px;top:829px;width:838px;height:46px;background:#f5f5f5;border-top:1px solid #cfcfcf;border-right:1px solid #cfcfcf;border-bottom:1px solid #c4c4c4"></div>
<div class="a" style="left:728px;top:832px;width:207px;height:38px;background:#fff;border:1px solid #cfcfcf"></div>
<div class="t" style="right:526px;top:845.30px;font-size:13px;letter-spacing:0.25px;color:#222;font-weight:normal;text-align:right;">150 000.00</div>
</body></html>
